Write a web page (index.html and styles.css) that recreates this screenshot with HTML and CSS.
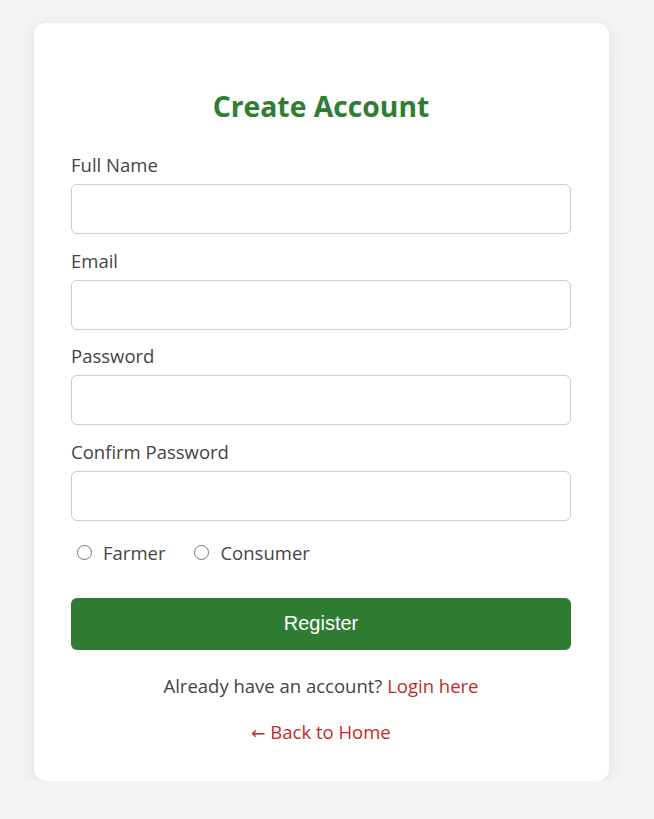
FILE: index.html
```html
<!DOCTYPE html>
<html lang="en">
<head>
<meta charset="utf-8">
<title>Create Account</title>
<link rel="stylesheet" href="styles.css">
</head>
<body>
<div class="card">
  <h2 class="title">Create Account</h2>
  <form class="form">
    <div class="field">
      <label class="label">Full Name</label>
      <input class="input" type="text">
    </div>
    <div class="field">
      <label class="label">Email</label>
      <input class="input" type="email">
    </div>
    <div class="field">
      <label class="label">Password</label>
      <input class="input" type="password">
    </div>
    <div class="field">
      <label class="label">Confirm Password</label>
      <input class="input" type="password">
    </div>
    <div class="roles">
      <label class="role"><input class="radio" type="radio" name="role"> Farmer</label>
      <label class="role"><input class="radio" type="radio" name="role"> Consumer</label>
    </div>
    <button class="btn" type="button">Register</button>
  </form>
  <p class="note">Already have an account? <a class="link" href="#">Login here</a></p>
  <p class="back"><a class="link" href="#"><span class="arrow">←</span> Back to Home</a></p>
</div>
</body>
</html>
```

FILE: styles.css
```css
* { box-sizing: border-box; }
html, body { margin: 0; padding: 0; }
body {
  background: #f4f4f4;
  font-family: "Open Sans", "Noto Sans", sans-serif;
  color: #444;
  padding-top: 23px;
}
.card {
  width: 575px;
  margin-left: 34px;
  background: #fff;
  border-radius: 12px;
  box-shadow: 0 4px 18px rgba(0,0,0,0.09);
  padding: 40px 38px 36px 37px;
}
.title {
  margin: 25px 0 28px;
  text-align: center;
  color: #2e7d32;
  font-size: 28.3px;
  line-height: 37px;
  font-weight: 700;
}
.form { margin: 0; }
.field { margin-bottom: 14.67px; }
.label {
  display: block;
  font-size: 18.5px;
  line-height: 24px;
  margin-bottom: 7px;
  color: #444;
}
.input {
  display: block;
  width: 100%;
  height: 50px;
  border: 1px solid #ccc;
  border-radius: 6px;
  font-size: 16px;
  padding: 0 12px;
  background: #fff;
}
.roles {
  display: flex;
  margin-top: 20px;
  font-size: 18.5px;
  line-height: 24px;
}
.role {
  display: flex;
  align-items: center;
  margin-right: 23px;
  color: #444;
}
.radio {
  width: 15px;
  height: 15px;
  margin: 0 11px 0 6px;
}
.btn {
  display: block;
  width: 100%;
  height: 52px;
  margin-top: 33px;
  border: none;
  border-radius: 6px;
  background: #2e7d32;
  color: #fff;
  font-family: "Liberation Sans", Arial, sans-serif;
  font-size: 20px;
}
.note {
  margin: 24px 0 0;
  text-align: center;
  font-size: 18.5px;
  line-height: 24px;
}
.back {
  margin: 22px 0 0;
  text-align: center;
  font-size: 18.5px;
  line-height: 24px;
}
.arrow {
  font-family: "DejaVu Sans", sans-serif;
  font-size: 17px;
}
.link {
  color: #c62828;
  text-decoration: none;
}
```
